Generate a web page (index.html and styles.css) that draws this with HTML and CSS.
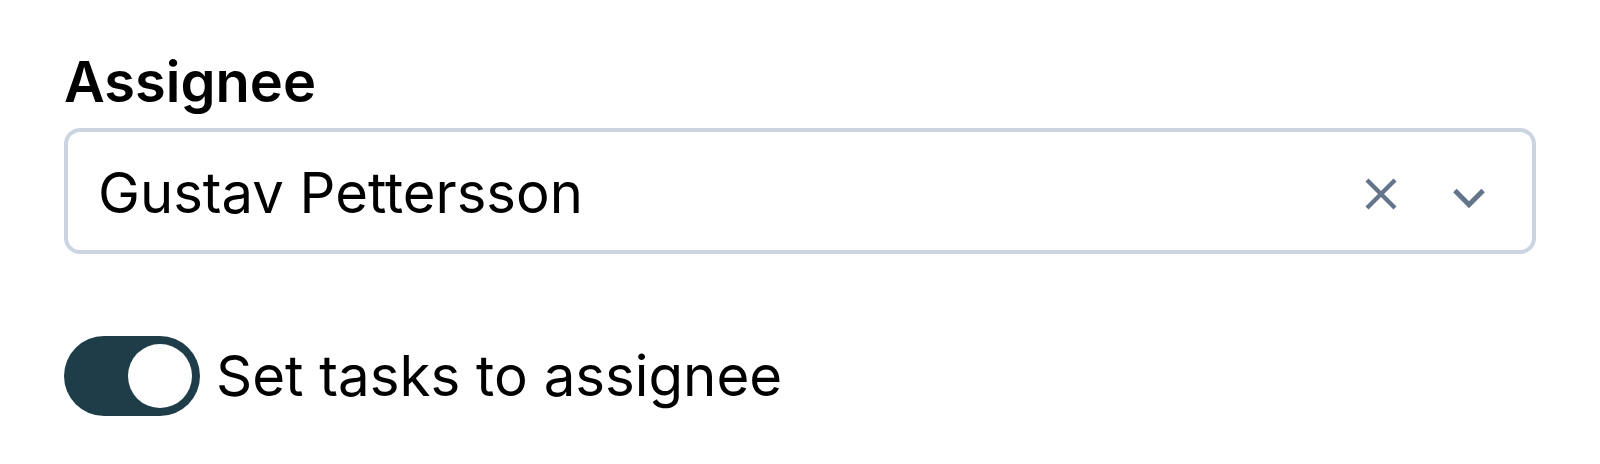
FILE: index.html
```html
<!DOCTYPE html>
<html lang="en">
<head>
<meta charset="utf-8">
<title>Assignee</title>
<link rel="stylesheet" href="styles.css">
</head>
<body>
<div class="page">
  <label class="field-label" for="assignee">Assignee</label>
  <div class="select" id="assignee">
    <span class="select-value">Gustav Pettersson</span>
    <div class="select-icons">
      <svg class="icon" width="48" height="48" viewBox="0 0 48 48" aria-hidden="true">
        <path d="M10 13 L38 41 M38 13 L10 41" fill="none" stroke="#64748b" stroke-width="4.4"/>
      </svg>
      <svg class="icon" width="48" height="48" viewBox="0 0 48 48" aria-hidden="true">
        <path d="M9.9 23.6 L24 37.7 L38.1 23.6" fill="none" stroke="#64748b" stroke-width="5"/>
      </svg>
    </div>
  </div>
  <div class="toggle-row">
    <span class="toggle is-on"><span class="knob"></span></span>
    <span class="toggle-label">Set tasks to assignee</span>
  </div>
</div>
</body>
</html>
```

FILE: styles.css
```css
html, body {
  margin: 0;
  padding: 0;
  background: #ffffff;
}

body {
  font-family: Inter, "Noto Sans", "Liberation Sans", sans-serif;
  color: #000000;
}

.page {
  width: 1472px;
  padding: 40px 64px 0 64px;
  display: flex;
  flex-direction: column;
}

.field-label {
  display: block;
  font-size: 56px;
  line-height: 84px;
  font-weight: 600;
}

.select {
  margin-top: 4px;
  box-sizing: border-box;
  height: 126px;
  border: 4px solid #cbd5e1;
  border-radius: 16px;
  display: flex;
  align-items: center;
  padding: 4px 39px 0 30px;
}

.select-value {
  flex: 1;
  font-size: 56.2px;
  line-height: 68px;
}

.select-icons {
  display: flex;
  align-items: center;
  gap: 40px;
  margin-top: -4px;
}

.icon {
  display: block;
}

.toggle-row {
  margin-top: 82px;
  display: flex;
  align-items: center;
  gap: 16px;
}

.toggle {
  box-sizing: border-box;
  width: 136px;
  height: 80px;
  border-radius: 40px;
  background: #1f3d49;
  padding: 8px;
  display: flex;
  justify-content: flex-start;
}

.toggle.is-on {
  justify-content: flex-end;
}

.knob {
  width: 64px;
  height: 64px;
  border-radius: 50%;
  background: #ffffff;
}

.toggle-label {
  font-size: 56.4px;
  line-height: 68px;
}
```
